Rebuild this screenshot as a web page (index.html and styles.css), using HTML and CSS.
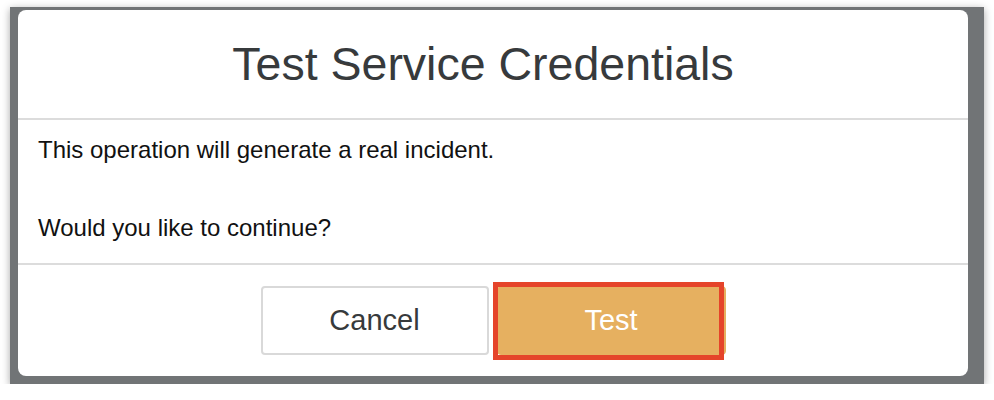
FILE: index.html
```html
<!DOCTYPE html>
<html lang="en">
<head>
<meta charset="utf-8">
<title>Test Service Credentials</title>
<link rel="stylesheet" href="styles.css">
</head>
<body>
<div class="frame">
  <div class="modal">
    <div class="modal-header">
      <h1 class="modal-title">Test Service Credentials</h1>
    </div>
    <div class="modal-body">
      <p>This operation will generate a real incident.</p>
      <p>Would you like to continue?</p>
    </div>
    <div class="modal-footer">
      <button class="btn btn-cancel" type="button">Cancel</button>
      <div class="highlight-wrap">
        <button class="btn btn-test" type="button">Test</button>
        <span class="highlight"></span>
      </div>
    </div>
  </div>
</div>
</body>
</html>
```
FILE: styles.css
```css
html, body {
  margin: 0;
  padding: 0;
  background: #ffffff;
}
body {
  font-family: "Liberation Sans", Arial, Helvetica, sans-serif;
  padding: 7px 10px 0 10px;
}
.frame {
  width: 974px;
  height: 377px;
  box-sizing: border-box;
  padding: 3px 16px 8px 8px;
  background: #717476;
  box-shadow: 0 2px 8px rgba(0, 0, 0, 0.35);
}
.modal {
  width: 950px;
  height: 366px;
  background: #ffffff;
  border-radius: 8px;
  display: flex;
  flex-direction: column;
  overflow: hidden;
}
.modal-header {
  height: 110px;
  box-sizing: border-box;
  padding-right: 20px;
  border-bottom: 2px solid #dcdcdc;
  display: flex;
  align-items: center;
  justify-content: center;
  flex: none;
}
.modal-title {
  margin: 0;
  font-size: 46.5px;
  font-weight: normal;
  color: #373a3c;
  line-height: 1;
}
.modal-body {
  height: 145px;
  box-sizing: border-box;
  padding: 16px 20px 0 20px;
  border-bottom: 2px solid #dcdcdc;
  display: flex;
  flex-direction: column;
  gap: 50px;
  flex: none;
}
.modal-body p {
  margin: 0;
  font-size: 24px;
  line-height: 28px;
  color: #111111;
}
.modal-footer {
  flex: 1;
  display: flex;
  align-items: center;
  justify-content: center;
  gap: 8px;
}
.btn {
  font-family: "Liberation Sans", Arial, Helvetica, sans-serif;
  font-size: 29px;
  height: 69px;
  border-radius: 4px;
  box-sizing: border-box;
  padding: 0;
  cursor: pointer;
}
.btn-cancel {
  width: 228px;
  background: #ffffff;
  border: 2px solid #d9d9d9;
  color: #373a3c;
}
.highlight-wrap {
  position: relative;
  display: flex;
}
.btn-test {
  width: 229px;
  background: #e6b060;
  border: 1px solid #e6b060;
  color: #ffffff;
}
.highlight {
  position: absolute;
  left: -4px;
  top: -4px;
  width: 231px;
  height: 78px;
  box-sizing: border-box;
  border: 5px solid #e5442a;
  pointer-events: none;
}
```
